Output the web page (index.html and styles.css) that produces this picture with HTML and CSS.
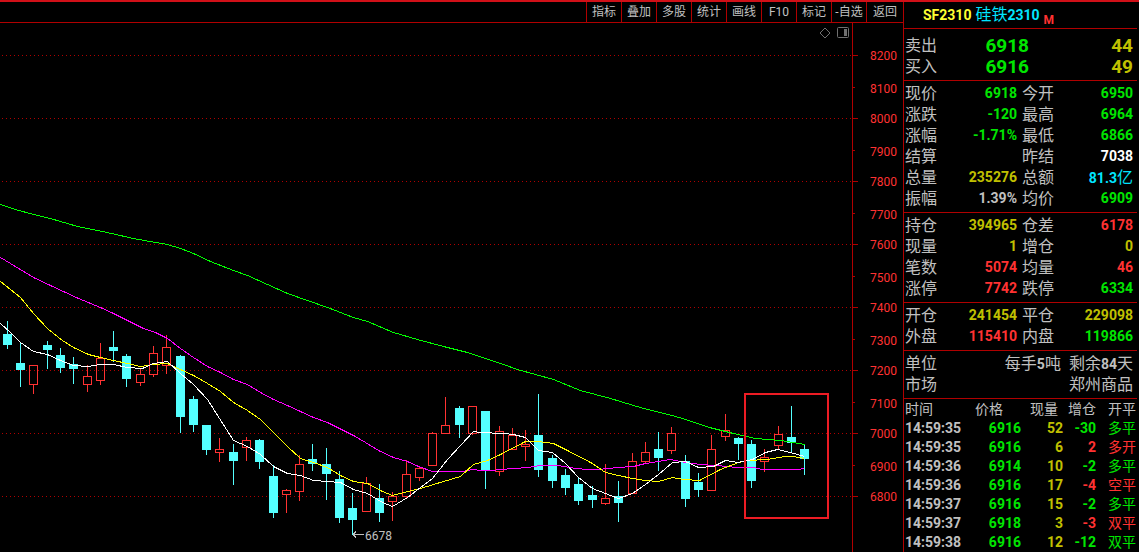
FILE: index.html
```html
<!DOCTYPE html>
<html lang="zh-CN">

<head>
    <meta charset="UTF-8">
    <meta name="viewport" content="width=device-width, initial-scale=1.0">
    <title>SF2310 硅铁2310</title>
    <link rel="stylesheet" href="styles.css">
</head>

<body>
    <div class="terminal">
        <main class="main">
            <nav class="toolbar">
                <button type="button">指标</button>
                <button type="button">叠加</button>
                <button type="button">多股</button>
                <button type="button">统计</button>
                <button type="button">画线</button>
                <button type="button">F10</button>
                <button type="button">标记</button>
                <button type="button">-自选</button>
                <button type="button">返回</button>
            </nav>
            <div class="chart">
                <svg id="kline" viewBox="0 0 903 529"></svg>
                <div class="chart-tools">
                    <button type="button" aria-label="菱形">
                        <svg width="12" height="12" viewBox="0 0 12 12"><path d="M6 1L11 6L6 11L1 6Z" /></svg>
                    </button>
                    <button type="button" aria-label="侧栏">
                        <svg width="12" height="12" viewBox="0 0 12 12"><rect x="0.5" y="0.5" width="11" height="10" rx="1" /><rect class="fill" x="7" y="2" width="3" height="7" /></svg>
                    </button>
                </div>
            </div>
        </main>

        <aside class="quote">
            <h1 class="title"><span class="code">SF2310</span> <span class="name">硅铁<b>2310</b></span><span class="mark">M</span></h1>

            <dl class="block order">
                <dt>卖出</dt><dd class="green">6918</dd><dd class="yellow">44</dd>
                <dt>买入</dt><dd class="green">6916</dd><dd class="yellow">49</dd>
            </dl>

            <dl class="block">
                <dt>现价</dt><dd class="green">6918</dd><dt>今开</dt><dd class="green">6950</dd>
                <dt>涨跌</dt><dd class="green">-120</dd><dt>最高</dt><dd class="green">6964</dd>
                <dt>涨幅</dt><dd class="green">-1.71%</dd><dt>最低</dt><dd class="green">6866</dd>
                <dt>结算</dt><dd></dd><dt>昨结</dt><dd class="white">7038</dd>
                <dt>总量</dt><dd class="yellow">235276</dd><dt>总额</dt><dd class="cyan">81.3<span class="cn">亿</span></dd>
                <dt>振幅</dt><dd>1.39%</dd><dt>均价</dt><dd class="green">6909</dd>
            </dl>

            <dl class="block">
                <dt>持仓</dt><dd class="yellow">394965</dd><dt>仓差</dt><dd class="red">6178</dd>
                <dt>现量</dt><dd class="yellow">1</dd><dt>增仓</dt><dd class="yellow">0</dd>
                <dt>笔数</dt><dd class="red">5074</dd><dt>均量</dt><dd class="red">46</dd>
                <dt>涨停</dt><dd class="red">7742</dd><dt>跌停</dt><dd class="green">6334</dd>
            </dl>

            <dl class="block">
                <dt>开仓</dt><dd class="yellow">241454</dd><dt>平仓</dt><dd class="yellow">229098</dd>
                <dt>外盘</dt><dd class="red">115410</dd><dt>内盘</dt><dd class="green">119866</dd>
            </dl>

            <dl class="block info">
                <dt>单位</dt><dd><span class="cn">每手</span>5<span class="cn">吨</span><span class="cn remain">剩余</span>84<span class="cn">天</span></dd>
                <dt>市场</dt><dd><span class="cn">郑州商品</span></dd>
            </dl>

            <table class="ticks">
                <thead>
                    <tr><th class="time">时间</th><th class="price">价格</th><th class="vol">现量</th><th class="chg">增仓</th><th>开平</th></tr>
                </thead>
                <tbody>
                    <tr><td>14:59:35</td><td class="green">6916</td><td class="yellow">52</td><td class="green">-30</td><td class="green">多平</td></tr>
                    <tr><td>14:59:35</td><td class="green">6916</td><td class="yellow">6</td><td class="red">2</td><td class="red">多开</td></tr>
                    <tr><td>14:59:36</td><td class="green">6914</td><td class="yellow">10</td><td class="green">-2</td><td class="green">多平</td></tr>
                    <tr><td>14:59:36</td><td class="green">6916</td><td class="yellow">17</td><td class="red">-4</td><td class="red">空平</td></tr>
                    <tr><td>14:59:37</td><td class="green">6916</td><td class="yellow">15</td><td class="green">-2</td><td class="green">多平</td></tr>
                    <tr><td>14:59:37</td><td class="green">6918</td><td class="yellow">3</td><td class="red">-3</td><td class="red">双平</td></tr>
                    <tr><td>14:59:38</td><td class="green">6916</td><td class="yellow">12</td><td class="green">-12</td><td class="green">双平</td></tr>
                </tbody>
            </table>
        </aside>
    </div>
    <script src="chart.js"></script>
</body>

</html>
```
FILE: styles.css
```css
* {
    box-sizing: border-box;
    padding: 0;
    margin: 0;
}

body {
    background-color: #000;
    color: #c0c0c0;
    font-family: Roboto, "Noto Sans CJK SC", sans-serif;
    overflow: hidden;
}

button {
    background: none;
    border: none;
    color: inherit;
    font-family: inherit;
}

.terminal {
    display: flex;
    min-height: 100vh;
    border-top: 2px solid #d01018;
}

.main {
    flex: 1;
    min-width: 0;
}

/* toolbar */
.toolbar {
    display: flex;
    justify-content: flex-end;
    height: 21px;
    border-bottom: 1px solid #b00000;
}

.toolbar button {
    width: 35px;
    font-size: 12px;
    line-height: 20px;
    border-left: 1px solid #b00000;
    white-space: nowrap;
}

.toolbar button:last-child {
    width: 37px;
}

/* chart */
.chart {
    position: relative;
}

#kline {
    display: block;
    width: 100%;
    height: auto;
}

#kline line,
#kline rect,
#kline polyline {
    shape-rendering: crispEdges;
    fill: none;
}

#kline .grid {
    stroke: #b00000;
    stroke-dasharray: 1 3;
}

#kline .axis {
    stroke: #b00000;
}

#kline .scale {
    fill: #ff3232;
    font-size: 12px;
    text-anchor: end;
}

#kline .up {
    stroke: #ff3232;
}

#kline .down {
    stroke: #54ffff;
}

#kline rect.down {
    fill: #54ffff;
}

#kline .low-mark {
    fill: #c0c0c0;
    font-size: 12px;
}

#kline .arrow {
    stroke: #c0c0c0;
}

#kline .box {
    stroke: #ed1c24;
    stroke-width: 2;
}

.chart-tools {
    position: absolute;
    top: 4px;
    right: 54px;
    display: flex;
    gap: 6px;
}

.chart-tools button {
    width: 12px;
    height: 12px;
}

.chart-tools svg {
    display: block;
    fill: none;
    stroke: #707070;
}

.chart-tools .fill {
    fill: #707070;
    stroke: none;
}

/* quote panel */
.quote {
    width: 236px;
    padding-right: 2px;
    border-left: 1px solid #b00000;
    font-size: 14px;
    font-weight: bold;
}

.title {
    display: flex;
    height: 26px;
    padding-left: 19px;
    font-size: 14px;
    line-height: 26px;
}

.code {
    color: #ffff32;
}

.name {
    margin-left: 4px;
    color: #00e5ff;
    font-size: 16px;
    font-weight: normal;
}

.name b {
    font-size: 14px;
}

.mark {
    margin-left: 4px;
    padding-top: 5px;
    color: #ff3232;
    font-size: 12px;
}

.block {
    display: grid;
    grid-template-columns: 34px 78px 37px 1fr;
    padding: 2px 4px 3px 1px;
    border-top: 1px solid #b00000;
    line-height: 21px;
}

.block dt,
.cn {
    height: 21px;
    font-size: 16px;
    font-weight: normal;
}

.block dd {
    height: 21px;
    text-align: right;
}

.block dt:nth-of-type(even) {
    padding-left: 5px;
}

.order {
    grid-template-columns: 34px 90px 1fr;
    padding-top: 6px;
    padding-bottom: 3px;
}

.order dd {
    font-size: 19px;
}

.block.order dt,
.block.info dt {
    padding-left: 0;
}

.info {
    grid-template-columns: 34px 1fr;
}

.remain {
    margin-left: 8px;
}

.ticks {
    width: 100%;
    padding-right: 1px;
    border-top: 1px solid #b00000;
    border-collapse: separate;
    border-spacing: 0;
    table-layout: fixed;
    line-height: 19px;
    text-align: right;
}

.ticks th {
    font-weight: normal;
    line-height: 20px;
}

.ticks td {
    height: 19px;
}

.ticks td:last-child {
    font-weight: normal;
}

.ticks th:first-child,
.ticks td:first-child {
    padding-left: 1px;
    text-align: left;
}

.ticks .time {
    width: 71px;
}

.ticks .price {
    width: 46px;
    text-align: left;
}

.ticks .vol {
    width: 42px;
    padding-right: 5px;
}

.ticks .chg {
    width: 33px;
}

.green {
    color: #00e600;
}

.red {
    color: #ff3232;
}

.yellow {
    color: #c0c000;
}

.cyan {
    color: #00e5ff;
}

.white {
    color: #fff;
}
```
FILE: chart.js
```js
var svg = document.getElementById("kline");
var TOP = 23; // height of the toolbar above the chart
var AXIS_X = 852;

// x, high, low, body top, body bottom, 1 = up / 0 = down
var candles = [
    [7, 321, 349, 334, 345, 0], [20, 342, 387, 363, 370, 0], [33, 365, 394, 365, 385, 1],
    [47, 341, 369, 345, 350, 0], [60, 348, 373, 355, 368, 0], [73, 357, 384, 364, 369, 0],
    [87, 365, 392, 376, 385, 1], [100, 343, 385, 358, 381, 1], [113, 331, 362, 347, 351, 0],
    [126, 354, 387, 356, 379, 0], [140, 369, 386, 374, 383, 1], [153, 346, 377, 353, 375, 1],
    [166, 335, 374, 347, 366, 1], [180, 355, 433, 356, 417, 0], [193, 396, 432, 399, 425, 0],
    [206, 425, 455, 425, 450, 0], [219, 438, 462, 449, 453, 1], [233, 444, 485, 452, 461, 0],
    [246, 437, 461, 440, 448, 1], [259, 439, 469, 440, 462, 0], [273, 465, 518, 476, 513, 0],
    [286, 489, 513, 490, 495, 1], [299, 455, 501, 464, 492, 1], [312, 444, 471, 459, 464, 0],
    [326, 448, 500, 464, 474, 0], [339, 471, 523, 479, 518, 0], [352, 493, 535, 508, 520, 0],
    [366, 477, 512, 483, 512, 1], [379, 484, 522, 498, 513, 0], [392, 492, 521, 496, 502, 1],
    [406, 460, 499, 474, 497, 1], [419, 466, 481, 468, 478, 1], [432, 432, 466, 433, 466, 1],
    [445, 397, 434, 425, 434, 1], [459, 406, 438, 408, 425, 0], [472, 406, 435, 406, 434, 1],
    [485, 411, 489, 411, 470, 0], [499, 426, 476, 431, 472, 1], [512, 428, 450, 435, 450, 1],
    [525, 430, 461, 444, 447, 1], [538, 394, 477, 435, 470, 0], [552, 455, 488, 458, 481, 0],
    [565, 469, 495, 475, 488, 0], [578, 478, 505, 484, 501, 0], [592, 486, 508, 495, 500, 0],
    [605, 464, 505, 498, 504, 1], [618, 481, 522, 496, 503, 0], [632, 453, 494, 461, 494, 1],
    [645, 442, 463, 452, 462, 1], [658, 432, 471, 449, 458, 0], [671, 427, 454, 433, 451, 1],
    [685, 455, 507, 461, 499, 0], [698, 473, 497, 482, 490, 0], [711, 435, 491, 449, 491, 1],
    [725, 414, 441, 430, 437, 1], [738, 437, 460, 438, 444, 0], [751, 440, 488, 444, 481, 0],
    [764, 449, 472, 457, 462, 1], [778, 426, 449, 434, 446, 1], [791, 406, 452, 437, 443, 0],
    [804, 444, 475, 449, 459, 0]
];

// moving averages
var lines = {
    "#00ff00": [0,204, 15,209, 33,214, 50,218, 77,226, 102,231, 133,238, 155,242, 167,244, 180,248, 193,253, 210,261, 233,270, 247,275, 287,293, 327,307, 353,317, 367,321, 393,332, 417,339, 443,346, 467,352, 485,358, 500,363, 517,369, 553,379, 580,390, 610,398, 643,408, 672,415, 685,419, 709,427, 733,433, 755,438, 780,440, 805,444],
    "#ff00ff": [0,257, 10,263, 33,277, 50,285, 78,298, 100,307, 113,313, 143,328, 155,332, 167,338, 180,348, 193,357, 207,366, 220,372, 233,379, 247,384, 260,392, 273,399, 287,405, 300,411, 313,417, 327,422, 353,435, 365,442, 378,450, 393,457, 407,461, 418,466, 432,471, 462,471, 472,469, 480,470, 492,470, 500,469, 528,467, 540,465, 558,465, 575,468, 587,469, 598,469, 617,467, 633,466, 645,463, 670,459, 685,462, 700,464, 728,466, 735,467, 753,467, 762,469, 797,469, 804,468],
    "#ffff00": [0,281, 20,297, 33,313, 48,329, 62,340, 73,347, 88,354, 100,357, 113,360, 127,363, 140,366, 153,364, 167,363, 182,370, 193,375, 207,383, 220,391, 233,402, 247,410, 260,419, 287,446, 300,458, 313,462, 327,467, 340,475, 353,481, 367,483, 382,491, 392,495, 407,491, 420,488, 433,484, 460,476, 473,464, 487,460, 500,454, 525,441, 538,441, 553,443, 565,449, 592,463, 605,472, 618,475, 632,478, 645,480, 658,481, 672,477, 683,479, 699,480, 720,469, 738,462, 747,460, 767,459, 785,456, 793,456, 804,458],
    "#ffffff": [0,323, 10,332, 20,342, 33,351, 47,354, 60,360, 73,365, 88,366, 100,364, 113,364, 127,367, 142,368, 153,363, 167,361, 180,373, 193,384, 207,399, 233,440, 247,446, 260,454, 273,466, 287,473, 300,475, 313,480, 327,481, 340,482, 353,489, 367,493, 382,502, 392,506, 407,497, 420,487, 432,478, 447,459, 473,431, 480,432, 503,433, 513,434, 525,437, 538,450, 552,452, 565,463, 578,477, 592,488, 618,498, 632,493, 645,484, 658,474, 672,462, 685,461, 698,467, 713,466, 725,460, 737,462, 752,459, 765,452, 777,449, 790,452, 804,456]
};

function add(tag, attrs, text) {
    var node = document.createElementNS("http://www.w3.org/2000/svg", tag);
    for (var key in attrs)
        node.setAttribute(key, attrs[key]);
    if (text)
        node.textContent = text;
    svg.appendChild(node);
}

function addLine(cls, x1, y1, x2, y2) {
    add("line", { "class": cls, x1: x1, y1: y1 - TOP, x2: x2, y2: y2 - TOP });
}

// price scale, one grid line every 200
addLine("axis", AXIS_X + 0.5, TOP, AXIS_X + 0.5, 552);
for (var i = 0; i < 8; i++) {
    var y = 55 + i * 63;
    var price = 8200 - i * 200;
    addLine("grid", 2, y + 0.5, AXIS_X, y + 0.5);
    addLine("axis", AXIS_X, y + 0.5, AXIS_X + 6, y + 0.5);
    add("text", { "class": "scale", x: 897, y: y + 5 - TOP }, String(price));
    if (i < 7) {
        addLine("axis", AXIS_X, y + 32.5, AXIS_X + 3, y + 32.5);
        add("text", { "class": "scale", x: 897, y: y + 38 - TOP }, String(price - 100));
    }
}

candles.forEach(function (c) {
    var cls = c[5] ? "up" : "down";
    var x = c[0] + 0.5;
    if (c[1] < c[3])
        addLine(cls, x, c[1], x, c[3]);
    if (c[2] > c[4])
        addLine(cls, x, c[4], x, c[2]);
    add("rect", { "class": cls, x: c[0] - 3.5, y: c[3] + 0.5 - TOP, width: 8, height: c[4] - c[3] - 1 });
});

for (var color in lines) {
    var points = lines[color].map(function (v, n) {
        return n % 2 ? v + 0.5 - TOP : v + 0.5;
    });
    add("polyline", { points: points.join(" "), stroke: color });
}

// lowest price
addLine("arrow", 353, 534.5, 364, 534.5);
addLine("arrow", 353, 534.5, 356, 531.5);
addLine("arrow", 353, 534.5, 356, 537.5);
add("text", { "class": "low-mark", x: 365, y: 540 - TOP }, "6678");

add("rect", { "class": "box", x: 745, y: 394 - TOP, width: 83, height: 124 });
```
